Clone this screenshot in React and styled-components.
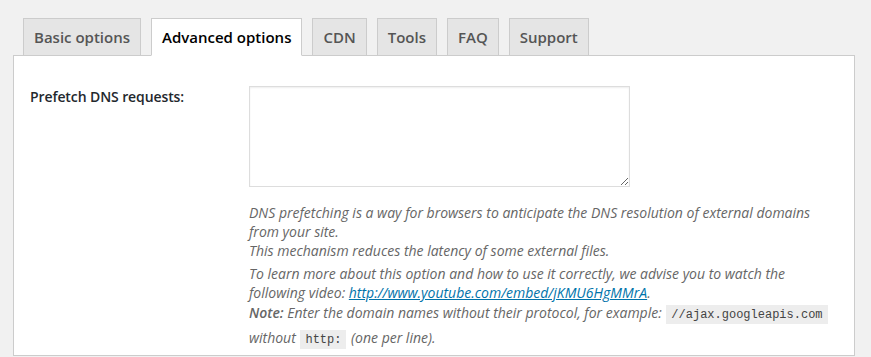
import styled, { createGlobalStyle } from "styled-components"

const GlobalStyle = createGlobalStyle`
    html, body {
        margin: 0;
        background: #f1f1f1;
        font-family: "Open Sans", "Liberation Sans", sans-serif;
        color: #23282d;
    }
`

const StyledPage = styled.div`
    padding: 18px 16px 0 13px;
`

const StyledTabs = styled.nav`
    display: flex;
    gap: 10px;
    padding-left: 10px;
    margin-bottom: -1px;
    position: relative;
    z-index: 1;
`

const StyledTab = styled.a`
    display: block;
    padding: 6px 10px;
    font-size: 15px;
    line-height: 24px;
    font-weight: 600;
    text-decoration: none;
    border: 1px solid #ccc;
    border-bottom-color: ${(p) => (p.$active ? "#fff" : "#ccc")};
    background: ${(p) => (p.$active ? "#fff" : "#e5e5e5")};
    color: ${(p) => (p.$active ? "#000" : "#555")};
`

const StyledPanel = styled.section`
    background: #fff;
    border: 1px solid #ccc;
    padding: 30px 16px 5px 16px;
`

const StyledRow = styled.div`
    display: grid;
    grid-template-columns: 219px 1fr;
`

const StyledLabel = styled.label`
    padding-top: 2px;
    font-size: 14px;
    font-weight: 600;
    line-height: 18px;
    letter-spacing: -0.1px;
    color: #23282d;
`

const StyledField = styled.div`
    display: flex;
    flex-direction: column;

    textarea {
        width: 381px;
        height: 101px;
        box-sizing: border-box;
        border: 1px solid #ddd;
        box-shadow: inset 0 1px 2px rgba(0, 0, 0, 0.07);
        margin: 0 0 16px;
        font-family: inherit;
    }
`

const StyledDescription = styled.p`
    margin: ${(p) => p.$margin || "0"};
    max-width: 580px;
    font-size: 14px;
    font-style: italic;
    line-height: ${(p) => p.$lineHeight || "19px"};
    color: #666;

    a {
        color: #0073aa;
    }

    strong {
        font-weight: 600;
    }

    code {
        font-family: "Liberation Mono", monospace;
        font-style: normal;
        font-size: 12px;
        line-height: 15px;
        padding: 3px 5px 2px;
        margin: 0 1px;
        background: rgba(0, 0, 0, 0.07);
        color: #444;
    }
`

const tabs = ["Basic options", "Advanced options", "CDN", "Tools", "FAQ", "Support"]

function App() {
    return (
        <StyledPage>
            <GlobalStyle />
            <StyledTabs>
                {tabs.map((tab) => (
                    <StyledTab key={tab} href="#" $active={tab === "Advanced options"}>
                        {tab}
                    </StyledTab>
                ))}
            </StyledTabs>
            <StyledPanel>
                <StyledRow>
                    <StyledLabel htmlFor="dns">Prefetch DNS requests:</StyledLabel>
                    <StyledField>
                        <textarea id="dns" />
                        <StyledDescription>
                            DNS prefetching is a way for browsers to anticipate the DNS resolution of external domains from your site.
                            <br />
                            This mechanism reduces the latency of some external files.
                        </StyledDescription>
                        <StyledDescription $margin="4px 0 0">
                            To learn more about this option and how to use it correctly, we advise you to watch the following video:{" "}
                            <a href="http://www.youtube.com/embed/jKMU6HgMMrA">http://www.youtube.com/embed/jKMU6HgMMrA</a>.
                        </StyledDescription>
                        <StyledDescription $margin="-2px 0 0" $lineHeight="25px">
                            <strong>Note:</strong> Enter the domain names without their protocol, for example: <code>//ajax.googleapis.com</code> without <code>http:</code> (one per line).
                        </StyledDescription>
                    </StyledField>
                </StyledRow>
            </StyledPanel>
        </StyledPage>
    )
}

export default App
